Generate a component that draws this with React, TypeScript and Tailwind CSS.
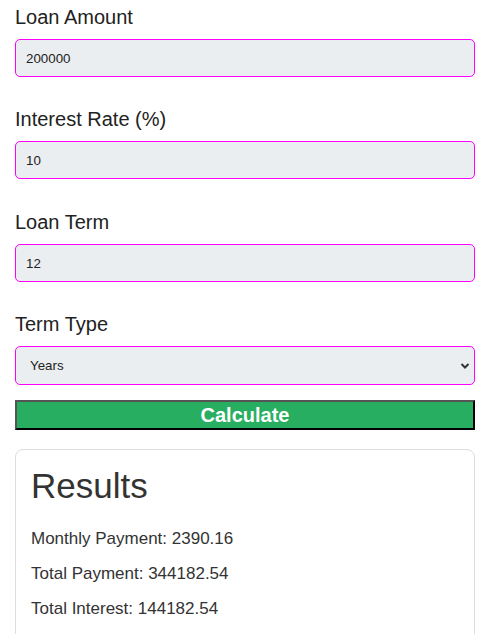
import { useState } from "react";

const fieldClass =
  "block w-full h-[38px] px-[10px] rounded-[5px] border border-[#ff00ff] bg-[#ebeef0] text-[13.33px] text-[#222] outline-none";

export default function App() {
  const [amount, setAmount] = useState("200000");
  const [rate, setRate] = useState("10");
  const [term, setTerm] = useState("12");
  const [termType, setTermType] = useState("years");

  return (
    <div
      className="pl-[15px] pr-[10px] pt-[6px] bg-white min-h-screen text-[#222]"
      style={{ fontFamily: '"Liberation Sans", Arial, sans-serif' }}
    >
      <div className="mb-[31px]">
        <label className="block text-[20px] leading-[23px] mb-[10px]">Loan Amount</label>
        <input className={fieldClass} value={amount} onChange={(e) => setAmount(e.target.value)} />
      </div>
      <div className="mb-[32px]">
        <label className="block text-[20px] leading-[23px] mb-[10px]">Interest Rate (%)</label>
        <input className={fieldClass} value={rate} onChange={(e) => setRate(e.target.value)} />
      </div>
      <div className="mb-[31px]">
        <label className="block text-[20px] leading-[23px] mb-[10px]">Loan Term</label>
        <input className={fieldClass} value={term} onChange={(e) => setTerm(e.target.value)} />
      </div>
      <div className="mb-[15px]">
        <label className="block text-[20px] leading-[23px] mb-[10px]">Term Type</label>
        <div className="relative">
          <select
            className={`${fieldClass} h-[39px] appearance-none pl-[14px]`}
            value={termType}
            onChange={(e) => setTermType(e.target.value)}
          >
            <option value="years">Years</option>
            <option value="months">Months</option>
          </select>
          <svg className="absolute right-[5px] top-[15px] pointer-events-none" width="10" height="10" viewBox="0 0 10 10">
            <path d="M1.5 3 L5 6.5 L8.5 3" stroke="#333" strokeWidth="2" fill="none" />
          </svg>
        </div>
      </div>
      <button className="block w-full h-[30px] bg-[#27ae60] border-2 border-t-[#555] border-l-[#555] border-b-black border-r-black text-white font-bold text-[20px] leading-none">
        Calculate
      </button>
      <div className="mt-[19px] rounded-[8px] border border-[#ddd] px-[15px] pt-[16px] pb-[10px] text-[#333]">
        <h2 className="text-[35px] leading-[40px] mb-[23px]">Results</h2>
        <p className="text-[17px] leading-[20px] mb-[15px]">Monthly Payment: 2390.16</p>
        <p className="text-[17px] leading-[20px] mb-[15px]">Total Payment: 344182.54</p>
        <p className="text-[17px] leading-[20px] mb-[15px]">Total Interest: 144182.54</p>
      </div>
    </div>
  );
}
